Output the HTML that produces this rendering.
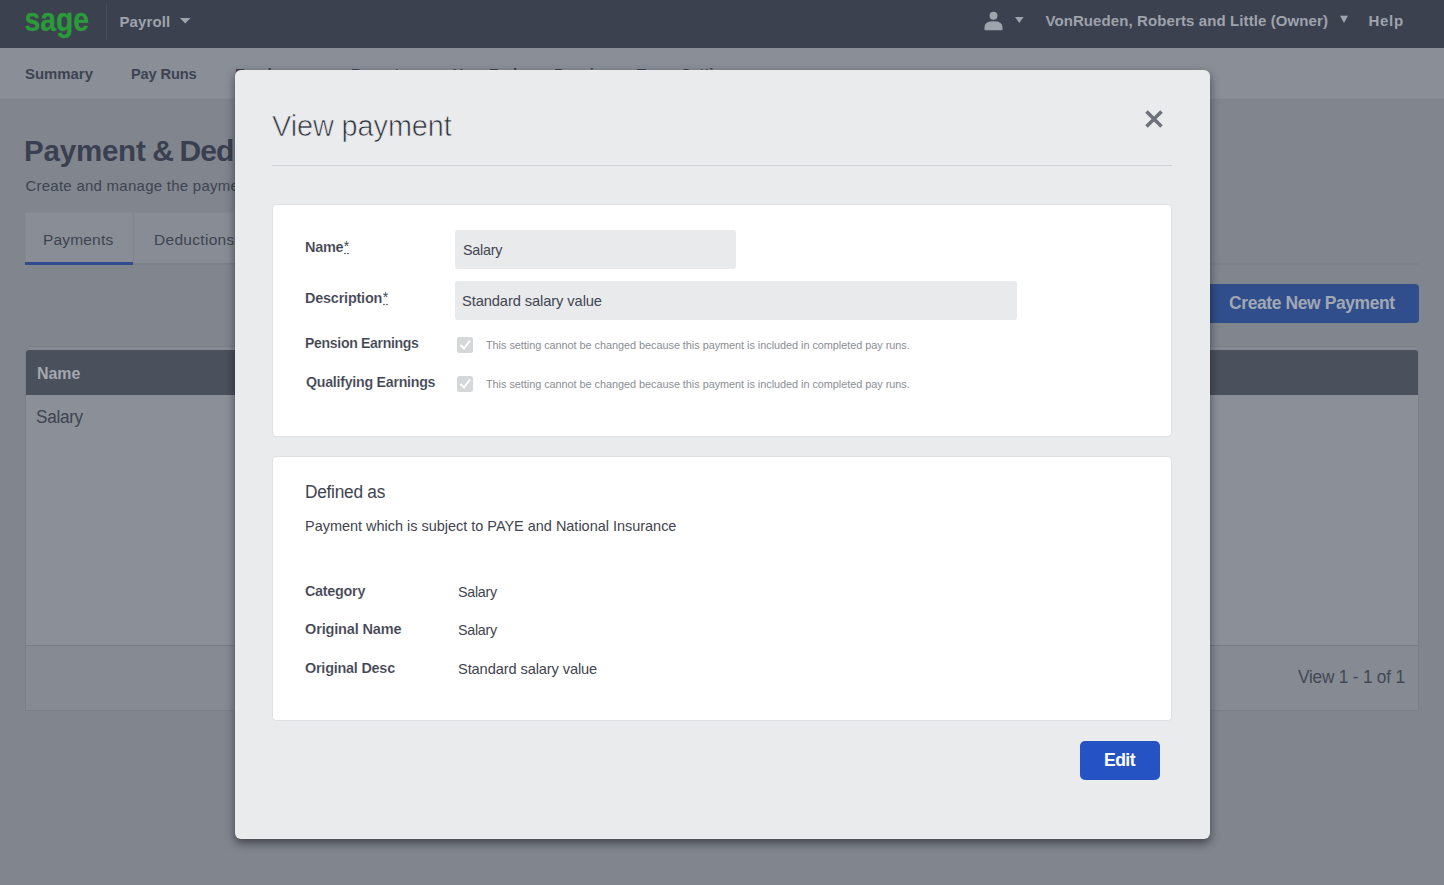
<!DOCTYPE html>
<html><head><meta charset="utf-8">
<style>
*{box-sizing:border-box;margin:0;padding:0}
html,body{width:1444px;height:885px;overflow:hidden}
body{font-family:"Liberation Sans",sans-serif;background:#80858e;position:relative}
.t{position:absolute;white-space:nowrap}
.b{position:absolute}
</style></head><body>
<!-- header -->
<div class="b" style="left:0;top:0;width:1444px;height:48px;background:#3c4150"></div>
<div class="b" style="left:106px;top:4px;width:1px;height:36px;background:#4a4f5d"></div>
<svg class="b" style="left:0;top:0" width="1444" height="48">
  <text x="24.5" y="31.2" font-family="Liberation Sans" font-weight="bold" font-size="34" fill="#2a9a3a" stroke="#2a9a3a" stroke-width="0.3" textLength="64.5" lengthAdjust="spacingAndGlyphs">sage</text>
  <path d="M180 18 L190.5 18 L185.25 23.6 Z" fill="#9ea3ac"/>
  <path d="M1015 17 L1023.6 17 L1019.3 23 Z" fill="#9ea3ac"/>
  <path d="M1340 15.8 L1348 15.8 L1344 22.9 Z" fill="#9ea3ac"/>
  <circle cx="993.5" cy="15.8" r="4" fill="#9ea3ac"/>
  <path d="M984.5 29.5 L984.5 27 Q984.5 21.3 993.5 21.3 Q1002.5 21.3 1002.5 27 L1002.5 29.5 Q1002.5 30.3 1001.7 30.3 L985.3 30.3 Q984.5 30.3 984.5 29.5 Z" fill="#9ea3ac"/>
</svg>
<!-- nav -->
<div class="b" style="left:0;top:48px;width:1444px;height:51px;background:#898e97"></div>
<div class="b" style="left:0;top:98px;width:1444px;height:1px;background:#858a93"></div>
<!-- tabs -->
<div class="b" style="left:25px;top:212px;width:108px;height:51px;background:#888d96;border:1px solid #848992;border-bottom:0"></div>
<div class="b" style="left:134px;top:212px;width:120px;height:51px;background:#878c95;border:1px solid #848992;border-bottom:0"></div>
<div class="b" style="left:25px;top:263px;width:1394px;height:2px;background:#7c818a"></div>
<div class="b" style="left:25px;top:262px;width:108px;height:3px;background:#2e4c8e"></div>
<!-- create button -->
<div class="b" style="left:1180px;top:284px;width:239px;height:39px;background:#2f4e8b;border-radius:4px"></div>
<!-- table -->
<div class="b" style="left:25px;top:346px;width:1394px;height:365px;border:1px solid #7a7f88;border-radius:4px 4px 0 0;background:#858a93"></div>
<div class="b" style="left:26px;top:350px;width:1392px;height:45px;background:#4a505c;border-radius:3px 3px 0 0"></div>
<div class="b" style="left:26px;top:395px;width:1392px;height:250px;background:#8a8f98"></div>
<div class="b" style="left:26px;top:645px;width:1392px;height:1px;background:#767b84"></div>
<div class="t" style="left:119.4px;top:14.0px;font-size:15px;line-height:15px;font-weight:bold;color:#9ea3ac;letter-spacing:0.124px;">Payroll</div>
<div class="t" style="left:1045.4px;top:13.2px;font-size:15px;line-height:15px;font-weight:bold;color:#9ea3ac;letter-spacing:0.103px;">VonRueden, Roberts and Little (Owner)</div>
<div class="t" style="left:1368.4px;top:13.0px;font-size:15px;line-height:15px;font-weight:bold;color:#9ea3ac;letter-spacing:0.753px;">Help</div>
<div class="t" style="left:24.7px;top:65.8px;font-size:15px;line-height:15px;font-weight:bold;color:#3e4352;letter-spacing:-0.028px;transform:scaleX(0.9963);transform-origin:0 0;">Summary</div>
<div class="t" style="left:131.0px;top:65.8px;font-size:15px;line-height:15px;font-weight:bold;color:#3e4352;letter-spacing:-0.151px;transform:scaleX(0.9764);transform-origin:0 0;">Pay Runs</div>
<div class="t" style="left:235.0px;top:65.8px;font-size:15px;line-height:15px;font-weight:bold;color:#3e4352;letter-spacing:0.000px;">Employees</div>
<div class="t" style="left:351.0px;top:65.8px;font-size:15px;line-height:15px;font-weight:bold;color:#3e4352;letter-spacing:0.000px;">Reports</div>
<div class="t" style="left:453.0px;top:65.8px;font-size:15px;line-height:15px;font-weight:bold;color:#3e4352;letter-spacing:0.000px;">Year End</div>
<div class="t" style="left:554.0px;top:65.8px;font-size:15px;line-height:15px;font-weight:bold;color:#3e4352;letter-spacing:0.000px;">Pensions</div>
<div class="t" style="left:637.0px;top:65.8px;font-size:15px;line-height:15px;font-weight:bold;color:#3e4352;letter-spacing:0.000px;">Tax</div>
<div class="t" style="left:681.0px;top:65.8px;font-size:15px;line-height:15px;font-weight:bold;color:#3e4352;letter-spacing:0.000px;">Settings</div>
<div class="t" style="left:23.8px;top:135.8px;font-size:30px;line-height:30px;font-weight:bold;color:#3b4050;letter-spacing:-0.219px;transform:scaleX(0.9840);transform-origin:0 0;">Payment</div>
<div class="t" style="left:152.3px;top:135.8px;font-size:30px;line-height:30px;font-weight:bold;color:#3b4050;letter-spacing:0.000px;">&amp;</div>
<div class="t" style="left:179.5px;top:135.8px;font-size:30px;line-height:30px;font-weight:bold;color:#3b4050;letter-spacing:0.000px;letter-spacing:-0.9px;">Deductions</div>
<div class="t" style="left:25.4px;top:177.6px;font-size:15px;line-height:15px;font-weight:normal;color:#3f4450;letter-spacing:0.257px;">Create and manage the payments and deductions</div>
<div class="t" style="left:43.0px;top:231.5px;font-size:15.5px;line-height:15.5px;font-weight:normal;color:#3f4450;letter-spacing:0.176px;">Payments</div>
<div class="t" style="left:154.0px;top:231.5px;font-size:15.5px;line-height:15.5px;font-weight:normal;color:#3f4450;letter-spacing:0.000px;letter-spacing:0.3px;">Deductions</div>
<div class="t" style="left:1228.9px;top:293.9px;font-size:18.5px;line-height:18.5px;font-weight:bold;color:#a2a8b3;letter-spacing:-0.408px;transform:scaleX(0.9436);transform-origin:0 0;">Create New Payment</div>
<div class="t" style="left:36.6px;top:366.3px;font-size:16px;line-height:16px;font-weight:bold;color:#a3a8b0;letter-spacing:-0.037px;transform:scaleX(0.9961);transform-origin:0 0;">Name</div>
<div class="t" style="left:36.0px;top:407.8px;font-size:18px;line-height:18px;font-weight:normal;color:#3f4450;letter-spacing:-0.313px;transform:scaleX(0.9544);transform-origin:0 0;">Salary</div>
<div class="t" style="left:1297.9px;top:667.8px;font-size:18px;line-height:18px;font-weight:normal;color:#434856;letter-spacing:-0.225px;transform:scaleX(0.9591);transform-origin:0 0;">View 1 - 1 of 1</div>
<!-- modal -->
<div class="b" style="left:235px;top:70px;width:975px;height:769px;background:#eaebed;border-radius:6px;box-shadow:0 4px 10px rgba(0,0,0,.5)"></div>
<div class="b" style="left:272px;top:165px;width:900px;height:1px;background:#cdd0d4"></div>
<svg class="b" style="left:0;top:0" width="1444" height="200">
  <path d="M1146.5 111.5 L1161.5 126.5 M1161.5 111.5 L1146.5 126.5" stroke="#6e727b" stroke-width="3.6" stroke-linecap="butt"/>
</svg>
<div class="b" style="left:272px;top:204px;width:900px;height:233px;background:#fff;border:1px solid #dfe1e4;border-radius:4px"></div>
<div class="b" style="left:455px;top:230px;width:281px;height:39px;background:#e9eaec;border-radius:3px"></div>
<div class="b" style="left:455px;top:281px;width:562px;height:39px;background:#e9eaec;border-radius:3px"></div>
<svg class="b" style="left:0;top:0" width="1444" height="450">
  <rect x="457" y="337" width="16" height="16" rx="2.5" fill="#d6d7d9"/>
  <path d="M460.5 345 L464 348.5 L470 340.5" stroke="#fff" stroke-width="2" fill="none"/>
  <rect x="457" y="376" width="16" height="16" rx="2.5" fill="#d6d7d9"/>
  <path d="M460.5 384 L464 387.5 L470 379.5" stroke="#fff" stroke-width="2" fill="none"/>
  <circle cx="345" cy="253.5" r="0.8" fill="#3a3f4c"/><circle cx="348" cy="253.5" r="0.8" fill="#3a3f4c"/>
  <circle cx="384" cy="304.5" r="0.8" fill="#3a3f4c"/><circle cx="387" cy="304.5" r="0.8" fill="#3a3f4c"/>
</svg>
<div class="b" style="left:272px;top:456px;width:900px;height:265px;background:#fff;border:1px solid #dfe1e4;border-radius:4px"></div>
<div class="b" style="left:1080px;top:741px;width:80px;height:39px;background:#2553c4;border-radius:5px"></div>
<div class="t" style="left:272.0px;top:111.7px;font-size:29px;line-height:29px;font-weight:normal;color:#2e323a;letter-spacing:-0.068px;transform:scaleX(0.9938);transform-origin:0 0;-webkit-text-stroke:0.7px #eaebed;">View payment</div>
<div class="t" style="left:304.5px;top:239.0px;font-size:15px;line-height:15px;font-weight:bold;color:#3d4250;letter-spacing:-0.300px;transform:scaleX(0.9660);transform-origin:0 0;-webkit-text-stroke:0.15px #fff;">Name</div>
<div class="t" style="left:462.5px;top:241.6px;font-size:15px;line-height:15px;font-weight:normal;color:#3f4450;letter-spacing:-0.263px;transform:scaleX(0.9544);transform-origin:0 0;">Salary</div>
<div class="t" style="left:304.6px;top:289.8px;font-size:15px;line-height:15px;font-weight:bold;color:#3d4250;letter-spacing:-0.210px;transform:scaleX(0.9615);transform-origin:0 0;-webkit-text-stroke:0.15px #fff;">Description</div>
<div class="t" style="left:382.8px;top:289.8px;font-size:14px;line-height:14px;font-weight:normal;color:#3d4250;letter-spacing:0.000px;">*</div>
<div class="t" style="left:343.8px;top:239.0px;font-size:14px;line-height:14px;font-weight:normal;color:#3d4250;letter-spacing:0.000px;">*</div>
<div class="t" style="left:462.4px;top:293.0px;font-size:15px;line-height:15px;font-weight:normal;color:#3f4450;letter-spacing:-0.102px;transform:scaleX(0.9789);transform-origin:0 0;">Standard salary value</div>
<div class="t" style="left:304.7px;top:334.8px;font-size:15px;line-height:15px;font-weight:bold;color:#3d4250;letter-spacing:-0.351px;transform:scaleX(0.9377);transform-origin:0 0;-webkit-text-stroke:0.15px #fff;">Pension Earnings</div>
<div class="t" style="left:305.6px;top:373.5px;font-size:15px;line-height:15px;font-weight:bold;color:#3d4250;letter-spacing:-0.277px;transform:scaleX(0.9475);transform-origin:0 0;-webkit-text-stroke:0.15px #fff;">Qualifying Earnings</div>
<div class="t" style="left:486.4px;top:339.7px;font-size:11px;line-height:11px;font-weight:normal;color:#8a8e95;letter-spacing:-0.038px;transform:scaleX(0.9888);transform-origin:0 0;">This setting cannot be changed because this payment is included in completed pay runs.</div>
<div class="t" style="left:486.4px;top:378.9px;font-size:11px;line-height:11px;font-weight:normal;color:#8a8e95;letter-spacing:-0.038px;transform:scaleX(0.9888);transform-origin:0 0;">This setting cannot be changed because this payment is included in completed pay runs.</div>
<div class="t" style="left:304.7px;top:483.0px;font-size:18px;line-height:18px;font-weight:normal;color:#3f4450;letter-spacing:-0.261px;transform:scaleX(0.9588);transform-origin:0 0;">Defined as</div>
<div class="t" style="left:304.7px;top:518.5px;font-size:14.5px;line-height:14.5px;font-weight:normal;color:#3f4450;letter-spacing:-0.009px;transform:scaleX(0.9980);transform-origin:0 0;">Payment which is subject to PAYE and National Insurance</div>
<div class="t" style="left:305.2px;top:582.8px;font-size:15px;line-height:15px;font-weight:bold;color:#3d4250;letter-spacing:-0.273px;transform:scaleX(0.9567);transform-origin:0 0;-webkit-text-stroke:0.15px #fff;">Category</div>
<div class="t" style="left:305.2px;top:621.4px;font-size:15px;line-height:15px;font-weight:bold;color:#3d4250;letter-spacing:-0.175px;transform:scaleX(0.9692);transform-origin:0 0;-webkit-text-stroke:0.15px #fff;">Original Name</div>
<div class="t" style="left:305.2px;top:659.6px;font-size:15px;line-height:15px;font-weight:bold;color:#3d4250;letter-spacing:-0.223px;transform:scaleX(0.9586);transform-origin:0 0;-webkit-text-stroke:0.15px #fff;">Original Desc</div>
<div class="t" style="left:458.1px;top:583.8px;font-size:15px;line-height:15px;font-weight:normal;color:#3f4450;letter-spacing:-0.280px;transform:scaleX(0.9516);transform-origin:0 0;">Salary</div>
<div class="t" style="left:458.1px;top:621.8px;font-size:15px;line-height:15px;font-weight:normal;color:#3f4450;letter-spacing:-0.280px;transform:scaleX(0.9516);transform-origin:0 0;">Salary</div>
<div class="t" style="left:458.1px;top:660.7px;font-size:15px;line-height:15px;font-weight:normal;color:#3f4450;letter-spacing:-0.118px;transform:scaleX(0.9756);transform-origin:0 0;">Standard salary value</div>
<div class="t" style="left:1103.8px;top:750.0px;font-size:19px;line-height:19px;font-weight:bold;color:#ffffff;letter-spacing:-0.604px;transform:scaleX(0.9246);transform-origin:0 0;">Edit</div>
</body></html>
